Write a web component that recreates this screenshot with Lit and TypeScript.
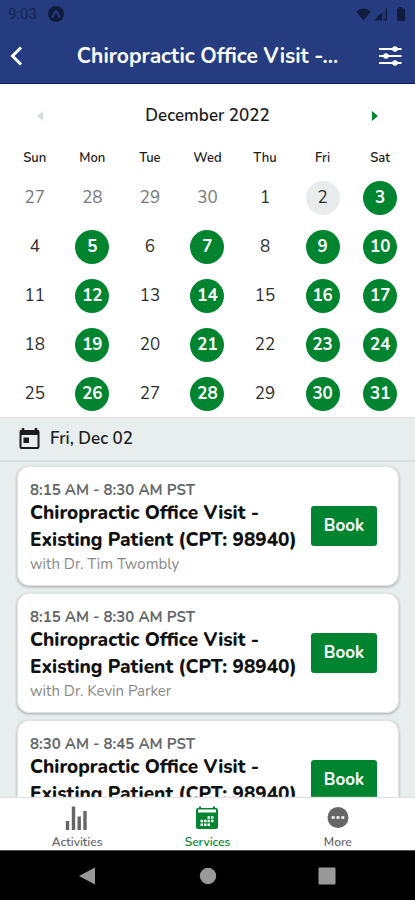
import { LitElement, html, css, svg, nothing } from "lit";
import { customElement, property } from "lit/decorators.js";
import { classMap } from "lit/directives/class-map.js";

type DayKind = "muted" | "plain" | "today" | "open";

interface Slot {
  time: string;
  title: string;
  provider?: string;
}

const WEEKDAYS = ["Sun", "Mon", "Tue", "Wed", "Thu", "Fri", "Sat"];
const OPEN_DAYS = new Set([3, 5, 7, 9, 10, 12, 14, 16, 17, 19, 21, 23, 24, 26, 28, 30, 31]);
const LEADING_DAYS = [27, 28, 29, 30];
const TODAY = 2;

const SERVICE = "Chiropractic Office Visit - Existing Patient (CPT: 98940)";
const SLOTS: Slot[] = [
  { time: "8:15 AM - 8:30 AM PST", title: SERVICE, provider: "with Dr. Tim Twombly" },
  { time: "8:15 AM - 8:30 AM PST", title: SERVICE, provider: "with Dr. Kevin Parker" },
  { time: "8:30 AM - 8:45 AM PST", title: SERVICE },
];

const reset = css`
  :host {
    display: block;
    box-sizing: border-box;
  }
  * {
    box-sizing: border-box;
  }
  button {
    margin: 0;
    padding: 0;
    border: 0;
    background: none;
    color: inherit;
    font: inherit;
    cursor: pointer;
  }
  svg {
    display: block;
  }
`;

@customElement("status-bar")
class StatusBar extends LitElement {
  static styles = [
    reset,
    css`
      :host {
        background: #253d80;
        color: #101b3d;
      }
      .bar {
        display: flex;
        align-items: center;
        height: 28px;
        padding: 0 8px;
        gap: 11px;
        font: 15px/20px Roboto, sans-serif;
      }
      .clock {
        color: #17254f;
      }
      .signals {
        display: flex;
        align-items: center;
        gap: 3px;
        margin-left: auto;
      }
    `,
  ];

  render() {
    return html`
      <div class="bar">
        <span class="clock">9:03</span>
        <svg width="16" height="16" viewBox="0 0 16 16" aria-hidden="true">
          <circle cx="8" cy="8" r="8" fill="currentColor" />
          <path d="M4.500 11 7.200 5.800Q8 4.500 8.800 5.800L11.500 11" fill="none" stroke="#253d80" stroke-width="2" stroke-linecap="round" />
        </svg>
        <div class="signals">
          <svg width="15" height="13" viewBox="0 0 15 13" aria-hidden="true">
            <path d="M7.500 12.500 0 3.500Q7.500-2.500 15 3.500Z" fill="currentColor" />
          </svg>
          <svg width="14" height="14" viewBox="0 0 14 14" aria-hidden="true">
            <path d="M0 13.500 8 5.200V13.500ZM12 1.500 13 .5V13.500H9.500V12.300H12Z" fill="currentColor" />
            <path d="M8 5.200 12 1.500V12.300H8Z" fill="currentColor" opacity=".3" />
          </svg>
          <svg width="16" height="14" viewBox="0 0 16 14" aria-hidden="true">
            <path d="M6 1.500H8V0h3V1.500H13Q14 1.500 14 2.500V13Q14 14 13 14H7Q6 14 6 13Z" fill="currentColor" />
          </svg>
        </div>
      </div>
    `;
  }
}

@customElement("title-bar")
class TitleBar extends LitElement {
  @property() heading = "";

  static styles = [
    reset,
    css`
      .bar {
        display: grid;
        grid-template-columns: 32px 1fr 32px;
        align-items: center;
        height: 56px;
        padding: 0 10px;
        background: #253d80;
        border-bottom: 1px solid #0c1763;
        color: #fff;
      }
      h1 {
        margin: 0;
        font-size: 21px;
        line-height: 28px;
        font-weight: 700;
        text-align: center;
        white-space: nowrap;
      }
      .end {
        justify-self: end;
      }
    `,
  ];

  render() {
    return html`
      <header class="bar">
        <button aria-label="Back">
          <svg width="16" height="24" viewBox="0 0 16 24">
            <path d="M11 3.500 2.500 12 11 20.500" fill="none" stroke="currentColor" stroke-width="3" />
          </svg>
        </button>
        <h1>${this.heading}</h1>
        <button class="end" aria-label="Filters">
          <svg width="26" height="22" viewBox="0 0 26 22">
            <path d="M0 4H22.500M0 11H22.500M0 18H22.500" stroke="currentColor" stroke-width="2.200" />
            <circle cx="16" cy="4" r="2.800" fill="currentColor" />
            <circle cx="7" cy="11" r="2.800" fill="currentColor" />
            <circle cx="16" cy="18" r="2.800" fill="currentColor" />
          </svg>
        </button>
      </header>
    `;
  }
}

@customElement("month-calendar")
class MonthCalendar extends LitElement {
  static styles = [
    reset,
    css`
      :host {
        background: #fff;
        color: #2d2d2d;
        padding: 16px 6px 6px;
      }
      .month {
        display: flex;
        align-items: center;
        justify-content: space-between;
        height: 32px;
        padding: 0 18px;
      }
      h2 {
        margin: 0;
        color: #1c1c1c;
        font-size: 17px;
        line-height: 24px;
        font-weight: 600;
      }
      .arrow {
        display: grid;
        place-items: center;
        width: 32px;
        height: 32px;
      }
      .prev {
        color: #d5dde2;
      }
      .next {
        color: #00842f;
      }
      table {
        width: 100%;
        table-layout: fixed;
        border-collapse: collapse;
        text-align: center;
      }
      th {
        height: 34px;
        padding: 18px 0 0;
        color: #1c1c1c;
        font-size: 13px;
        line-height: 16px;
        font-weight: 600;
      }
      td {
        height: 49px;
        padding: 0;
        vertical-align: bottom;
      }
      .day {
        display: block;
        width: 34px;
        height: 34px;
        margin: 0 auto;
        border-radius: 50%;
        font-size: 17px;
        line-height: 34px;
      }
      .muted {
        color: #73787b;
      }
      .today {
        background: #e8eced;
      }
      .open {
        background: #00842f;
        color: #fff;
        font-weight: 700;
      }
    `,
  ];

  private kindOf(day: number): DayKind {
    if (OPEN_DAYS.has(day)) return "open";
    return day === TODAY ? "today" : "plain";
  }

  private get weeks() {
    const cells: { day: number; kind: DayKind }[] = LEADING_DAYS.map((day) => ({ day, kind: "muted" }));
    for (let day = 1; day <= 31; day++) cells.push({ day, kind: this.kindOf(day) });
    const rows = [];
    for (let i = 0; i < cells.length; i += 7) rows.push(cells.slice(i, i + 7));
    return rows;
  }

  render() {
    return html`
      <div class="month">
        <button class="arrow prev" aria-label="Previous month">
          <svg width="6" height="10" viewBox="0 0 6 10"><path d="M6 0V10L0 5Z" fill="currentColor" /></svg>
        </button>
        <h2>December 2022</h2>
        <button class="arrow next" aria-label="Next month">
          <svg width="6" height="10" viewBox="0 0 6 10"><path d="M0 0V10L6 5Z" fill="currentColor" /></svg>
        </button>
      </div>
      <table>
        <thead>
          <tr>
            ${WEEKDAYS.map((name) => html`<th scope="col">${name}</th>`)}
          </tr>
        </thead>
        <tbody>
          ${this.weeks.map(
            (week) => html`<tr>
              ${week.map(
                ({ day, kind }) => html`<td><button class=${classMap({ day: true, [kind]: true })}>${day}</button></td>`
              )}
            </tr>`
          )}
        </tbody>
      </table>
    `;
  }
}

@customElement("slot-card")
class SlotCard extends LitElement {
  @property({ attribute: false }) slotInfo?: Slot;

  static styles = [
    reset,
    css`
      .card {
        display: flex;
        align-items: center;
        gap: 4px;
        min-height: 120px;
        padding: 0 21px 0 12px;
        background: #fff;
        border: 1px solid #dfe3e4;
        border-radius: 12px;
        box-shadow: 0 1px 3px rgba(0, 0, 0, 0.3);
      }
      .text {
        flex: 1;
        align-self: flex-start;
        min-width: 0;
        padding: 13px 0 10px;
      }
      p,
      h3 {
        margin: 0;
      }
      .time {
        color: #66696a;
        font-size: 15px;
        line-height: 20px;
        font-weight: 700;
      }
      h3 {
        color: #111;
        font-size: 19px;
        line-height: 27px;
        font-weight: 800;
      }
      .provider {
        color: #888;
        font-size: 15px;
        line-height: 20px;
      }
      .book {
        width: 66px;
        height: 40px;
        border-radius: 3px;
        background: #00842f;
        color: #fff;
        font-size: 17px;
        line-height: 40px;
        font-weight: 700;
      }
    `,
  ];

  render() {
    const slot = this.slotInfo;
    if (!slot) return nothing;
    return html`
      <article class="card">
        <div class="text">
          <p class="time">${slot.time}</p>
          <h3>${slot.title}</h3>
          ${slot.provider ? html`<p class="provider">${slot.provider}</p>` : nothing}
        </div>
        <button class="book">Book</button>
      </article>
    `;
  }
}

const activitiesIcon = svg`<svg width="24" height="26" viewBox="0 0 24 26">
  <path d="M2.500 25V16M8.500 25V1.500M14.200 25V11.500M20 25V6" fill="none" stroke="currentColor" stroke-width="3.400" />
</svg>`;

const servicesIcon = svg`<svg width="24" height="26" viewBox="0 0 24 26">
  <path d="M4 3V1.500H6V3H18V1.500H20V3H21Q23 3 23 5V22Q23 24 21 24H3Q1 24 1 22V5Q1 3 3 3Z" fill="currentColor" />
  <path d="M3 4.500H21V7.500H3Z" fill="#fff" />
  <path d="M12.500 11.200h2.500v2.500h-2.500zM16 11.200h2.500v2.500h-2.500zM5.500 14.800h2.500v2.500h-2.500zM9 14.800h2.500v2.500h-2.500zM12.500 14.800h2.500v2.500h-2.500zM16 14.800h2.500v2.500h-2.500zM5.500 18.400h2.500v2.500h-2.500zM9 18.400h2.500v2.500h-2.500zM12.500 18.400h2.500v2.500h-2.500z" fill="#fff" />
</svg>`;

const moreIcon = svg`<svg width="24" height="26" viewBox="0 0 24 26">
  <circle cx="12" cy="12.500" r="10.500" fill="currentColor" />
  <path d="M5.700 11.200h3v2.600h-3zM10.500 11.200h3v2.600h-3zM15.300 11.200h3v2.600h-3z" fill="#fff" />
</svg>`;

@customElement("tab-bar")
class TabBar extends LitElement {
  static styles = [
    reset,
    css`
      nav {
        display: grid;
        grid-template-columns: repeat(3, 1fr);
        height: 52px;
        padding: 7px 12px 0;
        background: #fff;
        box-shadow: 0 -1px 1px #dfe2e3;
      }
      a {
        display: flex;
        flex-direction: column;
        align-items: center;
        gap: 3px;
        color: #666;
        font-size: 12px;
        line-height: 16px;
        font-weight: 600;
        text-decoration: none;
      }
      .active {
        color: #00842f;
      }
    `,
  ];

  render() {
    return html`
      <nav>
        <a href="#activities">${activitiesIcon}<span>Activities</span></a>
        <a href="#services" class="active" aria-current="page">${servicesIcon}<span>Services</span></a>
        <a href="#more">${moreIcon}<span>More</span></a>
      </nav>
    `;
  }
}

@customElement("system-nav")
class SystemNav extends LitElement {
  static styles = [
    reset,
    css`
      .keys {
        display: flex;
        justify-content: space-evenly;
        align-items: center;
        height: 50px;
        background: #000;
        border-top: 1px solid #555;
        color: #999;
      }
      .keys button {
        display: grid;
        place-items: center;
        width: 62px;
        height: 48px;
      }
    `,
  ];

  render() {
    return html`
      <div class="keys">
        <button aria-label="System back">
          <svg width="18" height="18" viewBox="0 0 18 18"><path d="M16 .5V17.500L0 9Z" fill="currentColor" /></svg>
        </button>
        <button aria-label="Home">
          <svg width="18" height="18" viewBox="0 0 18 18"><circle cx="9" cy="9" r="8.200" fill="currentColor" /></svg>
        </button>
        <button aria-label="Recent apps">
          <svg width="18" height="18" viewBox="0 0 18 18"><rect x=".5" y=".5" width="17" height="17" rx="1" fill="currentColor" /></svg>
        </button>
      </div>
    `;
  }
}

@customElement("app-root")
class AppRoot extends LitElement {
  static styles = [
    reset,
    css`
      :host {
        display: flex;
        flex-direction: column;
        height: 100vh;
        background: #e8eded;
        font-family: Nunito, Lato, sans-serif;
      }
      main {
        display: flex;
        flex: 1;
        flex-direction: column;
        min-height: 0;
      }
      .date {
        display: flex;
        flex: none;
        align-items: center;
        gap: 9px;
        height: 45px;
        padding: 0 18px;
        background: #e8eded;
        border-top: 1px solid #dde1e2;
        border-bottom: 2px solid #d8dcdd;
        color: #1c1c1c;
      }
      h2 {
        margin: 0;
        font-size: 17px;
        line-height: 24px;
        font-weight: 600;
      }
      .slots {
        display: flex;
        flex: 1;
        flex-direction: column;
        gap: 7px;
        min-height: 0;
        margin: 0;
        padding: 4px 16px 0 17px;
        overflow: hidden;
        list-style: none;
      }
      .slots li {
        flex: none;
      }
    `,
  ];

  render() {
    return html`
      <status-bar></status-bar>
      <title-bar heading="Chiropractic Office Visit -..."></title-bar>
      <main>
        <month-calendar></month-calendar>
        <section class="date">
          <svg width="23" height="24" viewBox="0 0 23 24" aria-hidden="true">
            <path d="M5 1v3M18 1v3" stroke="currentColor" stroke-width="2.500" />
            <rect x="2.500" y="4" width="18" height="17" rx="1" fill="none" stroke="currentColor" stroke-width="2" />
            <path d="M2 3H21V8H2Z" fill="currentColor" />
            <path d="M5.500 10.500h5.500v5.500H5.500Z" fill="currentColor" />
          </svg>
          <h2>Fri, Dec 02</h2>
        </section>
        <ul class="slots">
          ${SLOTS.map((slot) => html`<li><slot-card .slotInfo=${slot}></slot-card></li>`)}
        </ul>
      </main>
      <tab-bar></tab-bar>
      <system-nav></system-nav>
    `;
  }
}
